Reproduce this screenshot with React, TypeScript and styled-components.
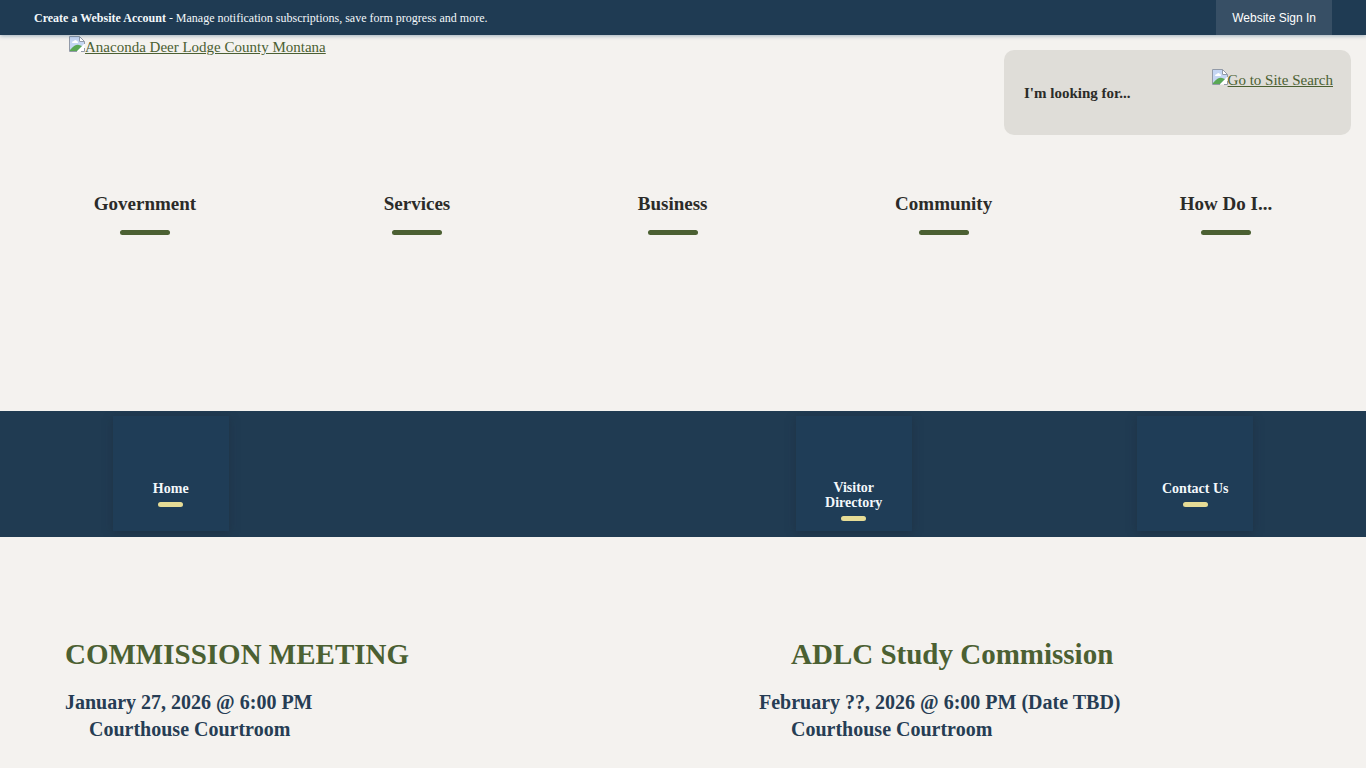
import React from 'react';
import styled, { createGlobalStyle } from 'styled-components';

const GlobalStyle = createGlobalStyle`
  * { box-sizing: border-box; }
  body {
    margin: 0;
    background: #f4f2ef;
    color: #2b2b28;
    font-family: "Liberation Serif", "Times New Roman", serif;
    font-size: 15px;
  }
  h2, p, ul { margin: 0; padding: 0; }
  ul { list-style: none; }
`;

const AccountBar = styled.aside`
  position: relative;
  display: flex;
  align-items: stretch;
  justify-content: space-between;
  height: 35px;
  padding: 0 34px;
  background: #1f3b53;
  color: #f3f8fb;
  font-size: 12px;
  box-shadow: 0 1px 4px rgba(31, 75, 115, 0.4);
`;

const AccountText = styled.p`
  line-height: 36px;
  a { color: inherit; font-weight: bold; text-decoration: none; }
`;

const SignInButton = styled.button`
  border: 0;
  padding: 0 16px;
  background: #374f65;
  color: #ffffff;
  font: 12px "Liberation Sans", Arial, sans-serif;
`;

const Header = styled.header`
  display: flex;
  justify-content: space-between;
  align-items: flex-start;
  height: 130px;
  padding: 1px 15px 0 69px;
`;

const ImageLink = styled.a`
  display: inline-flex;
  align-items: flex-start;
  color: #4b6032;
  line-height: 22px;
  white-space: nowrap;
  svg { flex: none; }
`;

const SearchPanel = styled.form`
  display: flex;
  justify-content: space-between;
  width: 347px;
  height: 85px;
  margin-top: 14px;
  padding: 19px 18px 0 20px;
  border-radius: 10px;
  background: #dfddd8;
`;

const SearchInput = styled.input`
  width: 160px;
  height: 48px;
  padding: 0;
  border: 0;
  background: transparent;
  font: bold 15px "Liberation Serif", "Times New Roman", serif;
  &::placeholder { color: #2b2b28; opacity: 1; }
`;

const MainNav = styled.nav`
  height: 246px;
  padding-top: 28px;
  ul { display: flex; justify-content: space-around; }
`;

const NavLink = styled.a`
  display: flex;
  flex-direction: column;
  align-items: center;
  gap: 15px;
  color: #2b2b28;
  font-size: 19px;
  font-weight: bold;
  line-height: 22px;
  text-decoration: none;
  &::after {
    content: "";
    width: 50px;
    height: 5px;
    border-radius: 3px;
    background: #4b6032;
  }
`;

const QuickLinks = styled.nav`
  display: grid;
  grid-template-columns: repeat(4, 1fr);
  justify-items: center;
  height: 126px;
  padding: 5px 0 6px;
  overflow: hidden;
  background: #203b52;
`;

const QuickLink = styled.a`
  display: flex;
  flex-direction: column;
  align-items: center;
  justify-content: flex-end;
  gap: 6px;
  width: 116px;
  padding: 0 20px 10px;
  background: #1f3d57;
  box-shadow: 0 2px 8px rgba(30, 45, 62, 0.6);
  color: #f3f8fb;
  font-size: 14px;
  font-weight: bold;
  line-height: 15px;
  text-align: center;
  text-decoration: none;
  &::after {
    content: "";
    width: 25px;
    height: 5px;
    border-radius: 3px;
    background: #e6dc96;
  }
`;

const SingleLineLink = styled(QuickLink)`
  padding-bottom: 24px;
`;

const Meetings = styled.main`
  display: grid;
  grid-template-columns: 1fr 1fr;
  padding: 98px 0 24px;
`;

const Meeting = styled.section<{ $inset: number }>`
  padding-left: ${(p) => p.$inset}px;
`;

const MeetingTitle = styled.h2<{ $indent?: number }>`
  margin-bottom: 16px;
  padding-left: ${(p) => p.$indent ?? 0}px;
  color: #4b6032;
  font-size: 29px;
  line-height: 38px;
`;

const MeetingLine = styled.p<{ $indent?: number }>`
  padding-left: ${(p) => p.$indent ?? 0}px;
  color: #263d54;
  font-size: 20px;
  font-weight: bold;
  line-height: 27px;
`;

const MissingImage = () => (
  <svg width="16" height="16" viewBox="0 0 16 16" aria-hidden="true">
    <path d="M0.5 15.5V0.5H10.5L15.5 5.5V15.5Z" fill="#ffffff" />
    <path d="M1 1H10V6H15V8L8 15H1Z" fill="#c5d6f3" />
    <path d="M3 7Q3 5 5 5Q6 3 8 5Q9 5 9 7Z" fill="#ffffff" />
    <path d="M1 15V14Q6 8 10 9L13 10L8 15Z" fill="#5aa854" />
    <path d="M0.5 15.5V0.5H10.5L15.5 5.5V8" fill="none" stroke="#929aa8" />
    <path d="M10.5 0.5V5.5H15.5" fill="none" stroke="#929aa8" />
    <path d="M0.5 15.5H8M12 15.5H15.5V12" fill="none" stroke="#929aa8" />
  </svg>
);

const navItems = ['Government', 'Services', 'Business', 'Community', 'How Do I...'];

export default function App() {
  return (
    <>
      <GlobalStyle />
      <AccountBar>
        <AccountText>
          <a href="#account">Create a Website Account</a> - Manage notification subscriptions, save form progress and more.
        </AccountText>
        <SignInButton type="button">Website Sign In</SignInButton>
      </AccountBar>
      <Header>
        <ImageLink href="#home"><MissingImage />Anaconda Deer Lodge County Montana</ImageLink>
        <SearchPanel role="search">
          <SearchInput type="text" aria-label="Search" placeholder="I'm looking for..." />
          <ImageLink href="#search"><MissingImage />Go to Site Search</ImageLink>
        </SearchPanel>
      </Header>
      <MainNav aria-label="Main">
        <ul>
          {navItems.map((item) => (
            <li key={item}><NavLink href="#nav">{item}</NavLink></li>
          ))}
        </ul>
      </MainNav>
      <QuickLinks aria-label="Quick links">
        <SingleLineLink href="#home">Home</SingleLineLink>
        <div />
        <QuickLink href="#directory">Visitor Directory</QuickLink>
        <SingleLineLink href="#contact">Contact Us</SingleLineLink>
      </QuickLinks>
      <Meetings>
        <Meeting $inset={65}>
          <MeetingTitle>COMMISSION MEETING</MeetingTitle>
          <MeetingLine>January 27, 2026 @ 6:00 PM</MeetingLine>
          <MeetingLine $indent={24}>Courthouse Courtroom</MeetingLine>
        </Meeting>
        <Meeting $inset={76}>
          <MeetingTitle $indent={32}>ADLC Study Commission</MeetingTitle>
          <MeetingLine>February ??, 2026 @ 6:00 PM (Date TBD)</MeetingLine>
          <MeetingLine $indent={32}>Courthouse Courtroom</MeetingLine>
        </Meeting>
      </Meetings>
    </>
  );
}
